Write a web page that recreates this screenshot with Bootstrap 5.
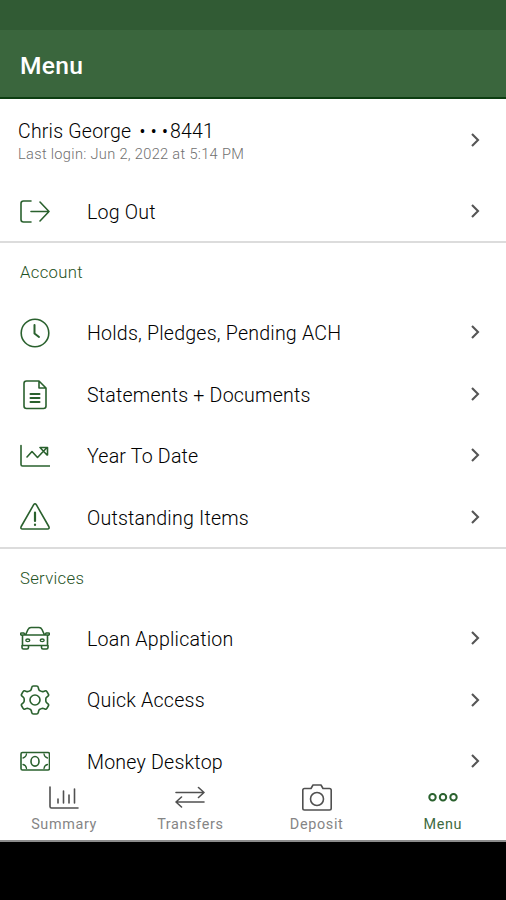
<!DOCTYPE html>
<html lang="en">
<head>
<meta charset="utf-8">
<meta name="viewport" content="width=device-width, initial-scale=1">
<title>Menu</title>
<link href="https://cdn.jsdelivr.net/npm/bootstrap@5.3.0/dist/css/bootstrap.min.css" rel="stylesheet">
<style>
body{font-family:Roboto,"Liberation Sans",sans-serif;background:#000;color:#000;line-height:1.2}
.screen{height:900px}
.status-strip{height:30px;background:#315b34}
.app-header{height:69px;background:#3a663d;border-bottom:2px solid #0c3d11;padding:4px 20px 0}
.app-header h1{font-size:24.6px;font-weight:500;letter-spacing:.3px}
.menu-body{background:#fff;min-height:0}
.profile-row{height:82px;padding:0 24px 0 18px}
.profile-text{padding-top:4px}
.profile-name{font-size:19.5px;font-weight:300;letter-spacing:.22px;line-height:24px}
.dots{font-size:17.5px;font-weight:400;letter-spacing:.9px;margin:0 1px 0 3px}
.profile-login{font-size:14.6px;font-weight:300;letter-spacing:.32px;line-height:21px;color:#707070}
.menu-row{height:61.4px;padding:0 24px 0 20px}
.menu-row .label{font-size:19.6px;font-weight:300;letter-spacing:.2px;margin-left:37px;padding-top:2px}
.menu-row .chev{margin-bottom:1.4px}
.glyph{width:30px;height:30px;fill:none;stroke:#2a612e;stroke-width:1.6;stroke-linecap:round;stroke-linejoin:round}
.chev{width:14px;height:16px;fill:none;stroke:#555;stroke-width:2.1}
.section-title{height:59.1px;padding:0 20px;font-size:16.7px;font-weight:300;letter-spacing:.3px;color:#1f5224}
.section-block{border-top:2px solid #dcdcdc;margin-top:-1px}
.tabs{height:63px;padding:4px 0 0 1px;background:#fff;border-bottom:2px solid #8c8c8c;color:#858585;font-size:14.4px;letter-spacing:.65px}
.tabs span{margin-top:3px}
.tabs .glyph{stroke:#505050}
.tabs .current{color:#3e6a41}
.tabs .current .glyph{stroke:#2a612e;stroke-width:2}
.tabs a{color:inherit}
.bottom-strip{height:58px}
</style>
<script src="https://cdn.jsdelivr.net/npm/bootstrap@5.3.0/dist/js/bootstrap.bundle.min.js"></script>
</head>
<body>
<svg class="d-none"><symbol id="chevron" viewBox="0 0 14 16"><path d="M4 2l6 6-6 6"/></symbol></svg>
<div class="screen d-flex flex-column overflow-hidden">
<div class="status-strip flex-shrink-0"></div>
<header class="app-header d-flex align-items-center flex-shrink-0 text-white"><h1 class="m-0">Menu</h1></header>
<main class="menu-body flex-grow-1 overflow-hidden">
<div class="profile-row d-flex align-items-center justify-content-between">
<div class="profile-text"><div class="profile-name">Chris George<span class="dots"> •&thinsp;•&thinsp;•</span>8441</div><div class="profile-login">Last login: Jun 2, 2022 at 5:14 PM</div></div>
<svg class="chev"><use href="#chevron"/></svg>
</div>
<div class="menu-row d-flex align-items-center">
<svg class="glyph" viewBox="0 0 30 30"><path d="M11 4H3.5Q1 4 1 6.500V22.500Q1 25 3.500 25H11M11 14.500H29M20 5l9 9.500-9 9.500"/></svg>
<span class="label">Log Out</span><svg class="chev ms-auto"><use href="#chevron"/></svg></div>
<section class="section-block">
<div class="section-title d-flex align-items-center">Account</div>
<div class="menu-row d-flex align-items-center">
<svg class="glyph" viewBox="0 0 30 30"><circle cx="15" cy="15" r="13.800"/><path d="M14.500 7v8.500l4.500 3.500" stroke-width="2"/></svg>
<span class="label">Holds, Pledges, Pending ACH</span><svg class="chev ms-auto"><use href="#chevron"/></svg></div>
<div class="menu-row d-flex align-items-center">
<svg class="glyph" viewBox="0 0 30 30"><path d="M19 1H6.500Q4 1 4 3.500v22.500Q4 28.500 6.500 28.500h17Q26 28.500 26 26V8zM19 1v7h7"/><path d="M10.500 14h9M10.500 18h9M10.500 22h9" stroke-width="2"/></svg>
<span class="label">Statements + Documents</span><svg class="chev ms-auto"><use href="#chevron"/></svg></div>
<div class="menu-row d-flex align-items-center">
<svg class="glyph" viewBox="0 0 30 30"><path d="M1 4.500V23.500Q1 25 2.500 25H29.500M7 16l5-5.500 5.500 6L27 6.500M20 6.500h7.500V14M20 6.500l7 7.500"/></svg>
<span class="label">Year To Date</span><svg class="chev ms-auto"><use href="#chevron"/></svg></div>
<div class="menu-row d-flex align-items-center">
<svg class="glyph" viewBox="0 0 30 30"><path d="M13.700 2.700Q15 .7 16.300 2.700L28.800 24.500Q29.800 27 27.500 27H2.500Q.2 27 1.200 24.500z"/><path d="M15 10.500v8.500M15 22.500v.5" stroke-width="2.200"/></svg>
<span class="label">Outstanding Items</span><svg class="chev ms-auto"><use href="#chevron"/></svg></div>
</section>
<section class="section-block">
<div class="section-title d-flex align-items-center">Services</div>
<div class="menu-row d-flex align-items-center">
<svg class="glyph" viewBox="0 0 30 30"><path d="M5.500 11L8 5.500Q9 3.500 11 3.500h8q2 0 3 2L24.500 11M2.500 11h25M2.500 11v10.500h25V11M5 11L4 9H1.500q-1 0-1 1t2 1.500M25 11L26 9h2.500q1 0 1 1T27.500 11.500M2 21.500v2q0 1.500 1.500 1.500H7q1.500 0 1.500-1.500v-2M21.500 21.500v2q0 1.500 1.500 1.500h3.500q1.500 0 1.500-1.500v-2"/><ellipse cx="7.800" cy="16.300" rx="2" ry="1.300" stroke-width="1.300"/><ellipse cx="22.200" cy="16.300" rx="2" ry="1.300" stroke-width="1.300"/></svg>
<span class="label">Loan Application</span><svg class="chev ms-auto"><use href="#chevron"/></svg></div>
<div class="menu-row d-flex align-items-center">
<svg class="glyph" viewBox="0 0 30 30"><circle cx="15" cy="15" r="5"/><path d="M13.500 1h3q1.500 0 1.800 1.500l.4 1.700q.3 1.300 1.700 1.700l1 .5q1 .5 2.200 0l1.300-.5q1.300-.5 2 .7l1.400 2.400q.8 1.300-.3 2.200l-1.200 1q-1 .8-1 1.800v2q0 1 1 1.800l1.200 1q1.100.9.3 2.200l-1.400 2.400q-.7 1.200-2 .7l-1.300-.5q-1.200-.5-2.200 0l-1 .5q-1.400.4-1.700 1.700l-.4 1.700Q18 29 16.500 29h-3q-1.500 0-1.800-1.500l-.4-1.700q-.3-1.300-1.700-1.700l-1-.5q-1-.5-2.200 0l-1.300.5q-1.300.5-2-.7L1.700 21q-.8-1.300.3-2.200l1.200-1q1-.8 1-1.800v-2q0-1-1-1.800l-1.200-1Q.9 10.300 1.700 9l1.400-2.400q.7-1.200 2-.7l1.300.5q1.200.5 2.200 0l1-.5q1.400-.4 1.700-1.700l.4-1.700Q12 1 13.500 1z"/></svg>
<span class="label">Quick Access</span><svg class="chev ms-auto"><use href="#chevron"/></svg></div>
<div class="menu-row d-flex align-items-center">
<svg class="glyph" viewBox="0 0 30 30"><rect x="1" y="5.500" width="28.500" height="17.500" rx="1.500"/><ellipse cx="15" cy="14.300" rx="4" ry="4.800"/><path d="M3 11q3-.5 3.500-4M27.500 11q-3-.5-3.500-4M3 17.500q3 .5 3.500 4M27.500 17.500q-3 .5-3.500 4" stroke-width="1.300"/></svg>
<span class="label">Money Desktop</span><svg class="chev ms-auto"><use href="#chevron"/></svg></div>
</section>
</main>
<nav class="tabs row g-0 flex-shrink-0 text-center">
<a class="col text-decoration-none d-flex flex-column align-items-center"><svg class="glyph" viewBox="0 0 30 30"><path d="M1 4v19.500Q1 25 2.500 25H29M9 20v-4M14.500 20V8M20 20v-8M25.500 20V6"/></svg><span>Summary</span></a>
<a class="col text-decoration-none d-flex flex-column align-items-center"><svg class="glyph" viewBox="0 0 30 30"><path d="M1 9.500h28M23.500 4.500l5.500 5-5.500 5M29 19H1M6.500 14L1 19l5.500 5"/></svg><span>Transfers</span></a>
<a class="col text-decoration-none d-flex flex-column align-items-center"><svg class="glyph" viewBox="0 0 30 30"><path d="M2.500 5.500H9l2-3.500h8L21 5.500h6.500Q29.200 5.500 29.200 7.200V25.300Q29.200 27 27.500 27h-25Q.8 27 .8 25.300V7.200Q.8 5.500 2.500 5.500z"/><circle cx="15" cy="16" r="6.500"/></svg><span>Deposit</span></a>
<a class="col text-decoration-none d-flex flex-column align-items-center current"><svg class="glyph" viewBox="0 0 30 30"><circle cx="4.500" cy="14.200" r="3.200"/><circle cx="15" cy="14.200" r="3.200"/><circle cx="25.500" cy="14.200" r="3.200"/></svg><span>Menu</span></a>
</nav>
<div class="bottom-strip flex-shrink-0"></div>
</div>
</body>
</html>
